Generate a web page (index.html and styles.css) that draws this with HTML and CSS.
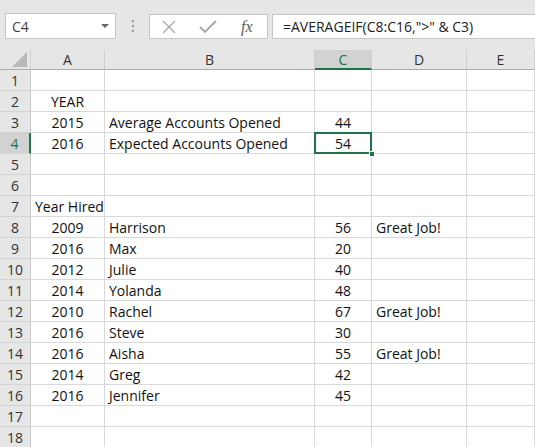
FILE: index.html
```html
<!DOCTYPE html>
<html>
<head>
<meta charset="utf-8">
<link rel="stylesheet" href="styles.css">
</head>
<body>
<div class="app">
  <div class="toolbar">
    <div class="namebox">
      <span class="name">C4</span>
      <svg class="caret" width="8" height="5" viewBox="0 0 8 5"><path d="M0 0 L8 0 L4 4 Z" fill="#666"/></svg>
    </div>
    <div class="grip">
      <svg width="4" height="14" viewBox="0 0 4 14"><circle cx="2" cy="2" r="1.2" fill="#9a9a9a"/><circle cx="2" cy="7" r="1.2" fill="#9a9a9a"/><circle cx="2" cy="12" r="1.2" fill="#9a9a9a"/></svg>
    </div>
    <div class="fxbox">
      <svg class="ico" width="16" height="14" viewBox="0 0 16 14"><path d="M2 1 L14 13 M14 1 L2 13" stroke="#a8a8a8" stroke-width="1.3" fill="none"/></svg>
      <svg class="ico" width="18" height="14" viewBox="0 0 18 14"><path d="M1 7 L6 12 L17 1" stroke="#a8a8a8" stroke-width="1.8" fill="none"/></svg>
      <span class="fx">fx</span>
    </div>
    <div class="formula">=AVERAGEIF(C8:C16,"&gt;" &amp; C3)</div>
  </div>
  <div class="sheet">
    <div class="corner"><svg width="15" height="15" viewBox="0 0 15 15"><path d="M15 0 L15 15 L0 15 Z" fill="#b8b8b8"/></svg></div>
    <div class="colhead">A</div>
    <div class="colhead">B</div>
    <div class="colhead sel">C</div>
    <div class="colhead">D</div>
    <div class="colhead">E</div>

    <div class="rowhead">1</div><div class="cell"></div><div class="cell"></div><div class="cell"></div><div class="cell"></div><div class="cell"></div>
    <div class="rowhead">2</div><div class="cell center">YEAR</div><div class="cell"></div><div class="cell"></div><div class="cell"></div><div class="cell"></div>
    <div class="rowhead">3</div><div class="cell center">2015</div><div class="cell">Average Accounts Opened</div><div class="cell center">44</div><div class="cell"></div><div class="cell"></div>
    <div class="rowhead sel">4</div><div class="cell center">2016</div><div class="cell">Expected Accounts Opened</div><div class="cell center active">54<span class="handle"></span></div><div class="cell"></div><div class="cell"></div>
    <div class="rowhead">5</div><div class="cell"></div><div class="cell"></div><div class="cell"></div><div class="cell"></div><div class="cell"></div>
    <div class="rowhead">6</div><div class="cell"></div><div class="cell"></div><div class="cell"></div><div class="cell"></div><div class="cell"></div>
    <div class="rowhead">7</div><div class="cell">Year Hired</div><div class="cell"></div><div class="cell"></div><div class="cell"></div><div class="cell"></div>
    <div class="rowhead">8</div><div class="cell center">2009</div><div class="cell">Harrison</div><div class="cell center">56</div><div class="cell">Great Job!</div><div class="cell"></div>
    <div class="rowhead">9</div><div class="cell center">2016</div><div class="cell">Max</div><div class="cell center">20</div><div class="cell"></div><div class="cell"></div>
    <div class="rowhead">10</div><div class="cell center">2012</div><div class="cell">Julie</div><div class="cell center">40</div><div class="cell"></div><div class="cell"></div>
    <div class="rowhead">11</div><div class="cell center">2014</div><div class="cell">Yolanda</div><div class="cell center">48</div><div class="cell"></div><div class="cell"></div>
    <div class="rowhead">12</div><div class="cell center">2010</div><div class="cell">Rachel</div><div class="cell center">67</div><div class="cell">Great Job!</div><div class="cell"></div>
    <div class="rowhead">13</div><div class="cell center">2016</div><div class="cell">Steve</div><div class="cell center">30</div><div class="cell"></div><div class="cell"></div>
    <div class="rowhead">14</div><div class="cell center">2016</div><div class="cell">Aisha</div><div class="cell center">55</div><div class="cell">Great Job!</div><div class="cell"></div>
    <div class="rowhead">15</div><div class="cell center">2014</div><div class="cell">Greg</div><div class="cell center">42</div><div class="cell"></div><div class="cell"></div>
    <div class="rowhead">16</div><div class="cell center">2016</div><div class="cell">Jennifer</div><div class="cell center">45</div><div class="cell"></div><div class="cell"></div>
    <div class="rowhead">17</div><div class="cell"></div><div class="cell"></div><div class="cell"></div><div class="cell"></div><div class="cell"></div>
    <div class="rowhead">18</div><div class="cell"></div><div class="cell"></div><div class="cell"></div><div class="cell"></div><div class="cell"></div>
  </div>
</div>
</body>
</html>
```

FILE: styles.css
```css
* { box-sizing: border-box; }
html, body { margin: 0; padding: 0; background: #ffffff; overflow: hidden; }
.app {
  width: 535px;
  height: 447px;
  overflow: hidden;
  font-family: "Open Sans", "Noto Sans", sans-serif;
  background: #e6e6e6;
}
.toolbar {
  height: 50px;
  display: flex;
  align-items: flex-start;
  padding: 13px 0 0 5px;
  background: #e6e6e6;
}
.namebox {
  width: 111px;
  height: 26px;
  background: #fff;
  border: 1px solid #c6c6c6;
  display: flex;
  align-items: center;
  justify-content: space-between;
  padding: 0 6px 0 6px;
  flex: none;
}
.name { font-size: 14px; color: #444; }
.caret { margin-top: 1px; }
.grip {
  width: 33px;
  height: 26px;
  display: flex;
  align-items: center;
  justify-content: center;
  flex: none;
}
.fxbox {
  width: 119px;
  height: 25px;
  margin-top: 1px;
  background: #fff;
  border: 1px solid #c6c6c6;
  display: flex;
  align-items: center;
  padding: 0 0 0 11px;
  gap: 22px;
  flex: none;
}
.fx {
  font-family: "Liberation Serif", serif;
  font-style: italic;
  font-size: 16px;
  color: #5a5a5a;
  margin-left: 2px;
}
.formula {
  margin-left: 4px;
  margin-top: 1px;
  height: 25px;
  width: 300px;
  flex: none;
  background: #fff;
  border: 1px solid #c6c6c6;
  border-right: none;
  font-size: 14px;
  line-height: 23px;
  padding-left: 10px;
  color: #222;
  white-space: nowrap;
}
.sheet {
  display: grid;
  grid-template-columns: 31px 74px 210px 57px 95px 68px;
  grid-template-rows: 20px repeat(18, 21px);
  background: #fff;
}
.corner {
  background: #e6e6e6;
  border-right: 1px solid #d0d0d0;
  border-bottom: 1px solid #ababab;
  display: flex;
  align-items: flex-end;
  justify-content: flex-end;
  padding: 0 3px 2px 0;
}
.colhead {
  background: #e6e6e6;
  border-right: 1px solid #cfcfcf;
  border-bottom: 1px solid #ababab;
  text-align: center;
  font-size: 14px;
  line-height: 20px;
  color: #333;
}
.colhead.sel {
  background: #d2d2d2;
  color: #217346;
  border-bottom: 2px solid #217346;
}
.rowhead {
  background: #e6e6e6;
  border-right: 1px solid #c6c6c6;
  border-bottom: 1px solid #d4d4d4;
  text-align: center;
  font-size: 14px;
  line-height: 20px;
  padding-top: 1px;
  color: #333;
}
.rowhead.sel {
  background: #d2d2d2;
  color: #217346;
  border-right: 2px solid #217346;
}
.cell {
  border-right: 1px solid #d9d9d9;
  border-bottom: 1px solid #d9d9d9;
  font-size: 14px;
  line-height: 20px;
  padding-top: 1px;
  padding-left: 4px;
  color: #111;
  white-space: nowrap;
}
.cell.center { text-align: center; padding-left: 0; }
.cell.active { position: relative; }
.cell.active::after {
  content: "";
  position: absolute;
  left: -1px;
  top: -1px;
  right: -1px;
  bottom: -1px;
  border: 2px solid #217346;
}
.handle {
  position: absolute;
  right: -4px;
  bottom: -4px;
  width: 6px;
  height: 6px;
  background: #217346;
  border: 1px solid #fff;
  z-index: 2;
}
```
